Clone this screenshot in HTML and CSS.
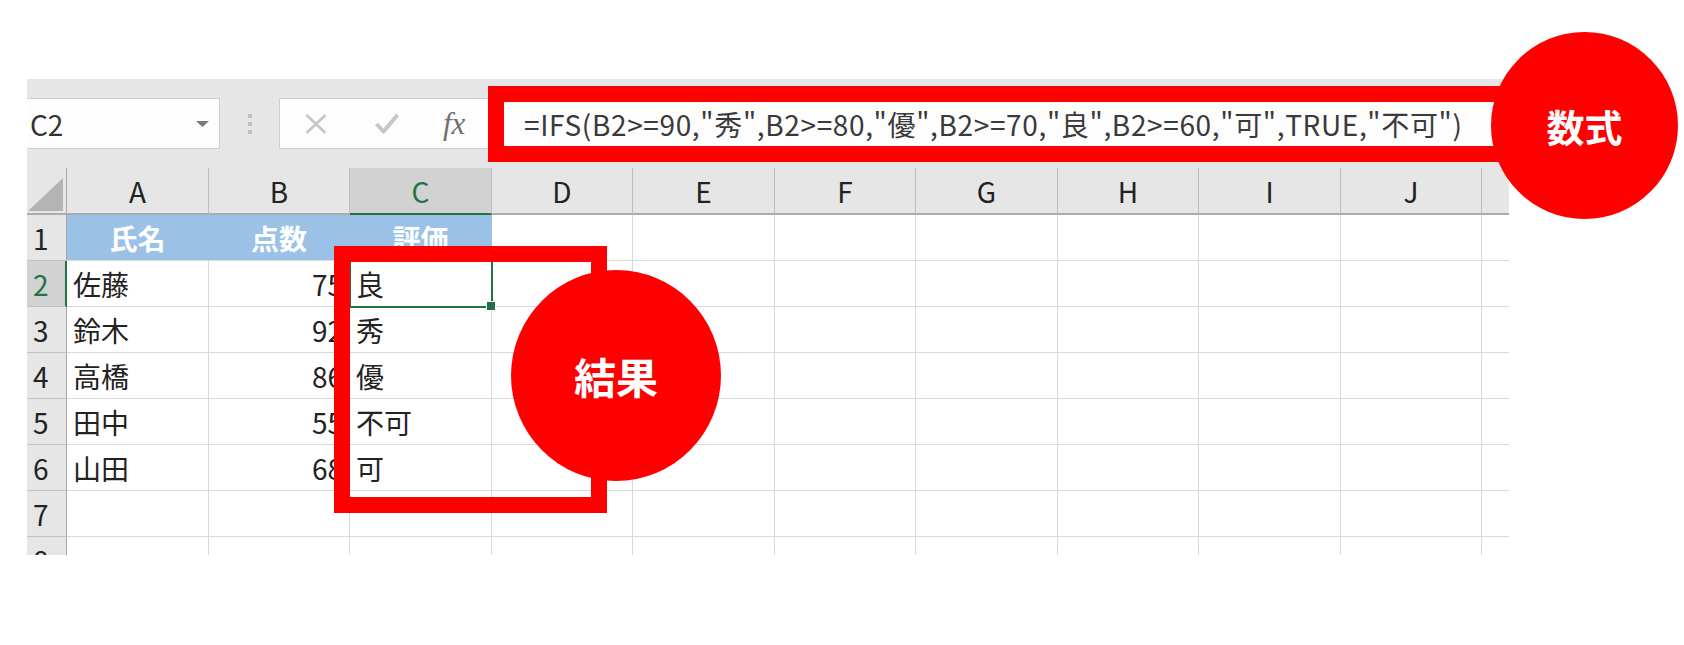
FILE: index.html
```html
<!DOCTYPE html>
<html lang="ja">
<head>
<meta charset="utf-8">
<title>IFS</title>
<link rel="stylesheet" href="styles.css">
</head>
<body>
<div class="sheet">
  <div class="fbar">
    <div class="namebox"><span>C2</span><svg class="dd" width="13" height="6" viewBox="0 0 13 6"><polygon points="0,0 13,0 6.5,6" fill="#7a7a7a"/></svg></div>
    <div class="sep"><i></i><i></i><i></i></div>
    <div class="fbox">
      <div class="ficons">
        <svg class="ic-x" width="22" height="20" viewBox="0 0 22 20"><path d="M1.5 1 L20.5 19 M20.5 1 L1.5 19" stroke="#c6c6c6" stroke-width="2.6" fill="none"/></svg>
        <svg class="ic-check" width="24" height="21" viewBox="0 0 24 21"><path d="M1.5 11 L8.5 18.5 L22.5 2" stroke="#c6c6c6" stroke-width="4" fill="none" stroke-linejoin="round"/></svg>
        <span class="fx">fx</span>
      </div>
      <div class="formula">=IFS(B2&gt;=90,"秀",B2&gt;=80,"優",B2&gt;=70,"良",B2&gt;=60,"可",TRUE,"不可")</div>
    </div>
  </div>
  <div class="grid">
    <div class="g corner"><svg width="38" height="40" viewBox="0 0 38 40"><polygon points="1,38 36,5 36,38" fill="#b4b4b4"/></svg></div>
    <div class="g ch">A</div><div class="g ch">B</div><div class="g ch sel">C</div><div class="g ch">D</div><div class="g ch">E</div><div class="g ch">F</div><div class="g ch">G</div><div class="g ch">H</div><div class="g ch">I</div><div class="g ch">J</div><div class="g ch last"></div>

    <div class="g rh">1</div>
    <div class="g hd">氏名</div><div class="g hd">点数</div><div class="g hd">評価</div><div class="g"></div><div class="g"></div><div class="g"></div><div class="g"></div><div class="g"></div><div class="g"></div><div class="g"></div><div class="g last"></div>

    <div class="g rh sel">2</div>
    <div class="g">佐藤</div><div class="g num">75</div><div class="g active">良</div><div class="g"></div><div class="g"></div><div class="g"></div><div class="g"></div><div class="g"></div><div class="g"></div><div class="g"></div><div class="g last"></div>

    <div class="g rh">3</div>
    <div class="g">鈴木</div><div class="g num">92</div><div class="g">秀</div><div class="g"></div><div class="g"></div><div class="g"></div><div class="g"></div><div class="g"></div><div class="g"></div><div class="g"></div><div class="g last"></div>

    <div class="g rh">4</div>
    <div class="g">高橋</div><div class="g num">86</div><div class="g">優</div><div class="g"></div><div class="g"></div><div class="g"></div><div class="g"></div><div class="g"></div><div class="g"></div><div class="g"></div><div class="g last"></div>

    <div class="g rh">5</div>
    <div class="g">田中</div><div class="g num">55</div><div class="g">不可</div><div class="g"></div><div class="g"></div><div class="g"></div><div class="g"></div><div class="g"></div><div class="g"></div><div class="g"></div><div class="g last"></div>

    <div class="g rh">6</div>
    <div class="g">山田</div><div class="g num">68</div><div class="g">可</div><div class="g"></div><div class="g"></div><div class="g"></div><div class="g"></div><div class="g"></div><div class="g"></div><div class="g"></div><div class="g last"></div>

    <div class="g rh">7</div>
    <div class="g"></div><div class="g"></div><div class="g"></div><div class="g"></div><div class="g"></div><div class="g"></div><div class="g"></div><div class="g"></div><div class="g"></div><div class="g"></div><div class="g last"></div>

    <div class="g rh">8</div>
    <div class="g"></div><div class="g"></div><div class="g"></div><div class="g"></div><div class="g"></div><div class="g"></div><div class="g"></div><div class="g"></div><div class="g"></div><div class="g"></div><div class="g last"></div>
  </div>
</div>

<div class="frame frame-formula"></div>
<div class="badge badge-formula">数式</div>
<div class="frame frame-result"></div>
<div class="badge badge-result">結果</div>
</body>
</html>
```
FILE: styles.css
```css
* { box-sizing: border-box; margin: 0; padding: 0; }
html, body { width: 1684px; height: 645px; overflow: hidden; background: #fff; }
body {
  position: relative;
  font-family: "Noto Sans CJK JP", "Noto Sans", sans-serif;
  color: #222;
}

.sheet {
  margin: 79px 0 0 27px;
  width: 1482px;
  height: 476px;
  overflow: hidden;
  background: #fff;
}

/* formula bar */
.fbar {
  height: 89px;
  background: #e6e6e6;
  display: flex;
  align-items: center;
}
.namebox {
  width: 193px;
  height: 51px;
  background: #fdfdfd;
  border: 1px solid #cfcfcf;
  border-left: none;
  display: flex;
  align-items: center;
  justify-content: space-between;
  padding: 0 10px 0 3px;
  font-size: 28px;
  color: #333;
}
.sep {
  width: 59px;
  display: flex;
  flex-direction: column;
  align-items: center;
  gap: 4px;
}
.sep i {
  display: block;
  width: 4px;
  height: 4px;
  background: #bdbdbd;
}
.fbox {
  flex: 1;
  height: 51px;
  background: #fdfdfd;
  border: 1px solid #cfcfcf;
  border-right: none;
  display: flex;
  align-items: center;
  white-space: nowrap;
}
.ficons {
  width: 209px;
  flex: none;
  display: flex;
  align-items: center;
}
.ic-x { margin-left: 25px; }
.ic-check { margin-left: 48px; }
.fx {
  margin-left: 44px;
  font-family: "Liberation Serif", serif;
  font-style: italic;
  font-size: 31px;
  color: #6f6f6f;
  line-height: 1;
}
.formula {
  padding-left: 35px;
  font-size: 28px;
  letter-spacing: 0.64px;
  color: #3a3a3a;
}

/* grid */
.grid {
  display: grid;
  grid-template-columns: 40px 142px 141px 142px 141px 142px 141px 142px 141px 142px 141px 27px;
  grid-template-rows: 47px repeat(8, 46px);
}
.g {
  border-right: 1px solid #d9d9d9;
  border-bottom: 1px solid #d9d9d9;
  display: flex;
  align-items: center;
  padding: 0 6px;
  font-size: 28px;
  white-space: nowrap;
  overflow: hidden;
  background: #fff;
}
.g.last { border-right: none; }
.corner {
  background: #e6e6e6;
  border-right: 1px solid #a8a8a8;
  border-bottom: 2px solid #ababab;
  padding: 0;
  align-items: flex-end;
}
.ch {
  background: #e6e6e6;
  border-right-color: #bdbdbd;
  border-bottom: 2px solid #ababab;
  justify-content: center;
  color: #222;
}
.ch.sel {
  background: #d2d2d2;
  color: #217346;
  border-bottom-color: #217346;
}
.rh {
  background: #e6e6e6;
  border-right-color: #a8a8a8;
  border-bottom-color: #c2c2c2;
  padding-left: 6px;
  color: #222;
}
.rh.sel {
  background: #d2d2d2;
  color: #217346;
  border-right: 2px solid #217346;
}
.hd {
  background: #9bc2e6;
  color: #fff;
  font-weight: 700;
  justify-content: center;
  border-right-color: #9bc2e6;
}
.num { justify-content: flex-end; }
.active {
  position: relative;
  overflow: visible;
  outline: 2px solid #217346;
  outline-offset: -1px;
  z-index: 2;
}
.active::after {
  content: "";
  position: absolute;
  right: -5px;
  bottom: -5px;
  width: 8px;
  height: 8px;
  background: #217346;
  border: 1px solid #fff;
}

/* annotations */
.frame {
  position: absolute;
  border: 16px solid #ff0000;
  z-index: 5;
}
.frame-formula { left: 488px; top: 86px; width: 1072px; height: 76px; }
.frame-result { left: 334px; top: 246px; width: 273px; height: 267px; }
.badge {
  position: absolute;
  z-index: 6;
  border-radius: 50%;
  background: #ff0000;
  color: #fff;
  font-weight: 700;
  display: flex;
  align-items: center;
  justify-content: center;
}
.badge-formula { left: 1491px; top: 32px; width: 187px; height: 187px; font-size: 38px; }
.badge-result { left: 511px; top: 270px; width: 210px; height: 211px; font-size: 42px; }
```
